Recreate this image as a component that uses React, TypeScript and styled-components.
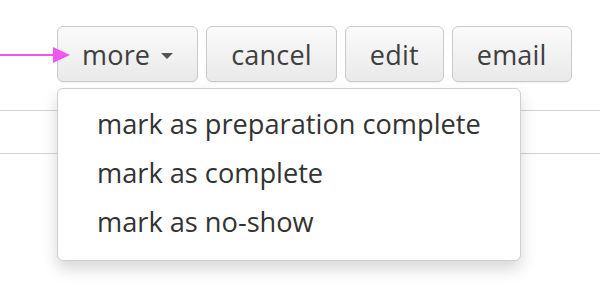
import React from 'react';
import styled, { createGlobalStyle } from 'styled-components';

const GlobalStyle = createGlobalStyle`
  html, body {
    margin: 0;
    padding: 0;
    background: #fff;
    font-family: "Open Sans", "Liberation Sans", sans-serif;
  }
`;

const Page = styled.div`
  position: relative;
  width: 600px;
  height: 306px;
  overflow: hidden;
`;

const Toolbar = styled.div`
  display: flex;
  gap: 8px;
  padding: 26px 0 0 57px;
`;

const Group = styled.div`
  position: relative;
`;

const Button = styled.button`
  display: flex;
  align-items: center;
  gap: 11px;
  height: 56px;
  padding: 0 24px;
  border: 1px solid #cacaca;
  border-radius: 6px;
  background: linear-gradient(#fbfbfb, #e9e9e9);
  box-shadow: 0 1px 1px rgba(0, 0, 0, 0.06);
  color: #3f3f3f;
  font-family: inherit;
  font-size: 27px;
  letter-spacing: 0.2px;
  line-height: 1;
  cursor: pointer;
`;

const Caret = styled.span`
  width: 0;
  height: 0;
  margin-top: 4px;
  border-left: 6px solid transparent;
  border-right: 6px solid transparent;
  border-top: 6px solid #555;
`;

const Rows = styled.div`
  margin-top: 28px;
`;

const Row = styled.div<{ $h: number }>`
  height: ${(p) => p.$h}px;
  border-top: 1px solid #d2d2d2;
`;

const Menu = styled.ul`
  position: absolute;
  top: calc(100% + 6px);
  left: 0;
  width: 464px;
  margin: 0;
  padding: 10px 0 14px;
  list-style: none;
  background: #fff;
  border: 1px solid #cfcfcf;
  border-radius: 6px;
  box-shadow: 0 8px 16px rgba(0, 0, 0, 0.16);
  box-sizing: border-box;
  z-index: 2;
`;

const MenuItem = styled.li`
  height: 49px;
  display: flex;
  align-items: center;
  padding-left: 39px;
  color: #333;
  font-size: 27.2px;
`;

const Arrow = styled.svg`
  position: absolute;
  left: 0;
  top: 47px;
  z-index: 3;
`;

const items = ['mark as preparation complete', 'mark as complete', 'mark as no-show'];

const App = () => {
  return (
    <Page>
      <GlobalStyle />
      <Toolbar>
        <Group>
          <Button>
            more <Caret />
          </Button>
          <Menu>
            {items.map((item) => (
              <MenuItem key={item}>{item}</MenuItem>
            ))}
          </Menu>
        </Group>
        <Button>cancel</Button>
        <Button>edit</Button>
        <Button>email</Button>
      </Toolbar>
      <Rows>
        <Row $h={42} />
        <Row $h={42} />
      </Rows>
      <Arrow width="72" height="16" viewBox="0 0 72 16">
        <line x1="0" y1="8" x2="56" y2="8" stroke="#f056f0" strokeWidth="2" />
        <polygon points="53,0 70,8 53,16" fill="#f056f0" />
      </Arrow>
    </Page>
  );
};

export default App;
